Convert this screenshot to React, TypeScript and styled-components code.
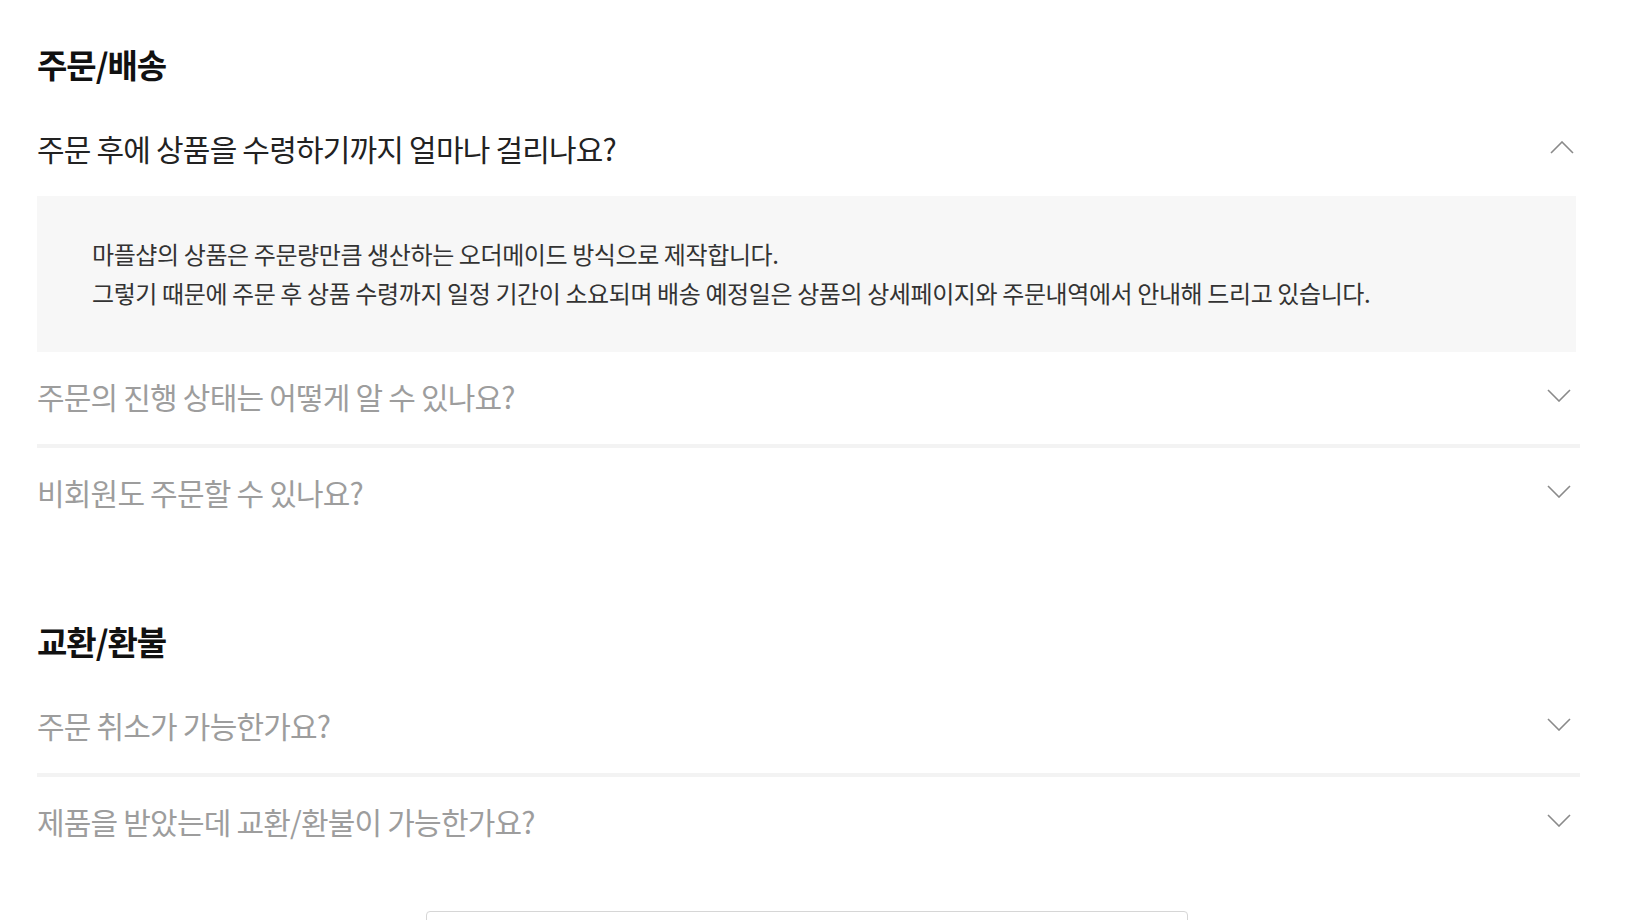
import styled, { createGlobalStyle } from 'styled-components'

interface FaqItem {
  question: string
  answer?: string[]
  open?: boolean
}

interface FaqSectionData {
  title: string
  items: FaqItem[]
}

const sections: FaqSectionData[] = [
  {
    title: '주문/배송',
    items: [
      {
        question: '주문 후에 상품을 수령하기까지 얼마나 걸리나요?',
        open: true,
        answer: [
          '마플샵의 상품은 주문량만큼 생산하는 오더메이드 방식으로 제작합니다.',
          '그렇기 때문에 주문 후 상품 수령까지 일정 기간이 소요되며 배송 예정일은 상품의 상세페이지와 주문내역에서 안내해 드리고 있습니다.',
        ],
      },
      { question: '주문의 진행 상태는 어떻게 알 수 있나요?' },
      { question: '비회원도 주문할 수 있나요?' },
    ],
  },
  {
    title: '교환/환불',
    items: [
      { question: '주문 취소가 가능한가요?' },
      { question: '제품을 받았는데 교환/환불이 가능한가요?' },
    ],
  },
]

const Chevron = ({ open }: { open?: boolean }) => (
  <ChevronIcon $open={open} width="24" height="13" viewBox="0 0 24 13">
    <polyline
      points={open ? '1,12 12,1 23,12' : '1,1 12,12 23,1'}
      fill="none"
      stroke="#8a8a8a"
      strokeWidth="1.6"
    />
  </ChevronIcon>
)

const App = () => {
  return (
    <>
      <GlobalStyle />
      <Page>
        {sections.map((section, si) => (
          <Section key={section.title} $first={si === 0}>
            <SectionTitle>{section.title}</SectionTitle>
            {section.items.map((item, i) => (
              <Item
                key={item.question}
                $divider={i > 0 && !section.items[i - 1].open}
              >
                <QuestionRow>
                  <Question $open={item.open}>{item.question}</Question>
                  <Chevron open={item.open} />
                </QuestionRow>
                {item.open && item.answer && (
                  <AnswerPanel>
                    {item.answer.map((line) => (
                      <AnswerLine key={line}>{line}</AnswerLine>
                    ))}
                  </AnswerPanel>
                )}
              </Item>
            ))}
          </Section>
        ))}
        <MoreButton type="button" />
      </Page>
    </>
  )
}

export default App

const GlobalStyle = createGlobalStyle`
  body {
    margin: 0;
    background: #fff;
    font-family: 'Noto Sans CJK KR', 'Noto Sans', sans-serif;
  }
`

const Page = styled.div`
  display: flex;
  flex-direction: column;
  width: 1543px;
  margin-left: 37px;
  padding-top: 46px;
`

const Section = styled.section<{ $first?: boolean }>`
  display: flex;
  flex-direction: column;
  margin-top: ${({ $first }) => ($first ? '0' : '83px')};
`

const SectionTitle = styled.h2`
  margin: 0 0 22px;
  height: 36px;
  font-size: 33px;
  line-height: 36px;
  font-weight: 700;
  letter-spacing: -1px;
  color: #111;
`

const Item = styled.div<{ $divider?: boolean }>`
  display: flex;
  flex-direction: column;
  border-top: ${({ $divider }) => ($divider ? '4px solid #f3f3f3' : 'none')};
`

const QuestionRow = styled.div`
  display: flex;
  align-items: center;
  justify-content: space-between;
  padding: 26px 0 30px;
`

const Question = styled.span<{ $open?: boolean }>`
  font-size: 30px;
  line-height: 36px;
  font-weight: 400;
  letter-spacing: -0.8px;
  color: ${({ $open }) => ($open ? '#222' : '#9d9d9d')};
`

const ChevronIcon = styled.svg<{ $open?: boolean }>`
  flex-shrink: 0;
  margin-right: ${({ $open }) => ($open ? '6px' : '9px')};
  margin-top: -1px;
`

const AnswerPanel = styled.div`
  display: flex;
  flex-direction: column;
  margin-right: 4px;
  padding: 38px 55px 40px;
  background: #f7f7f7;
`

const AnswerLine = styled.p`
  margin: 0;
  font-size: 24px;
  line-height: 39px;
  letter-spacing: -0.4px;
  color: #333;
`

const MoreButton = styled.button`
  align-self: center;
  width: 762px;
  height: 62px;
  margin: 42px 0 40px -4px;
  border: 1px solid #d6d6d6;
  border-radius: 4px;
  background: #fff;
`
